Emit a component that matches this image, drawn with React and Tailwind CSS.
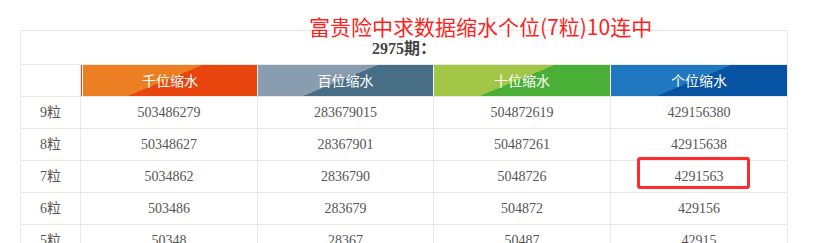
const heads = [
  { label: '千位缩水', bg: 'bg-[linear-gradient(157.5deg,#EC7F22_48%,#E8460E_48%)]' },
  { label: '百位缩水', bg: 'bg-[linear-gradient(157.5deg,#8A9DB0_48%,#476E85_48%)]' },
  { label: '十位缩水', bg: 'bg-[linear-gradient(157.5deg,#A2C646_48%,#4AAF37_48%)]' },
  { label: '个位缩水', bg: 'bg-[linear-gradient(157.5deg,#1F78BF_48%,#0753A3_48%)]' },
]

const rows = [
  ['9粒', '503486279', '283679015', '504872619', '429156380'],
  ['8粒', '50348627', '28367901', '50487261', '42915638'],
  ['7粒', '5034862', '2836790', '5048726', '4291563'],
  ['6粒', '503486', '283679', '504872', '429156'],
  ['5粒', '50348', '28367', '50487', '42915'],
]

const widths = ['w-[60px]', 'w-[177px]', 'w-[176px]', 'w-[177px]', 'w-[176px]']

export default function App() {
  return (
    <div className="relative h-[243px] w-[823px] overflow-hidden bg-white">
      {/* red headline sits over the table edge */}
      <div className="absolute left-[309px] top-[12px] z-10 text-[21px] leading-[28px] text-[#ff1f1f] [font-family:'Noto_Sans_CJK_SC',sans-serif]">
        富贵险中求数据缩水个位(7粒)10连中
      </div>

      <div className="ml-[20px] mt-[30px] w-[768px] border border-[#e8e8e8] text-[#555] [font-family:'Liberation_Serif','Noto_Sans_CJK_SC',serif]">
        <div className="flex h-[34px] items-center justify-center border-b border-[#e8e8e8] pt-[3px] text-[16px] font-bold text-[#444]">
          2975期：
        </div>

        <div className="flex h-[32px] border-b border-[#e8e8e8]">
          <div className="w-[60px] border-r border-[#e8e8e8]" />
          {heads.map((h, i) => (
            <div
              key={h.label}
              className={`${widths[i + 1]} flex ${i < 3 ? 'border-r border-white' : ''}`}
            >
              {i === 0 && <div className="w-[1px] bg-[#E8460E]" />}
              {i === 0 && <div className="w-[1px] bg-white" />}
              <div
                className={`flex flex-1 items-center justify-center ${h.bg} text-[14px] text-white [font-family:'Noto_Sans_CJK_SC',sans-serif]`}
              >
                {h.label}
              </div>
            </div>
          ))}
        </div>

        {rows.map((r) => (
          <div key={r[0]} className="flex h-[32px] border-b border-[#e8e8e8] text-[14px]">
            {r.map((c, j) => (
              <div
                key={j}
                className={`${widths[j]} relative flex items-center justify-center ${j < 4 ? 'border-r border-[#e8e8e8]' : ''}`}
              >
                {c}
                {r[0] === '7粒' && j === 4 && (
                  <div className="absolute left-[26px] top-[-4px] h-[32px] w-[113px] rounded-[3px] border-[3px] border-[#ff2b2b]" />
                )}
              </div>
            ))}
          </div>
        ))}
      </div>
    </div>
  )
}
